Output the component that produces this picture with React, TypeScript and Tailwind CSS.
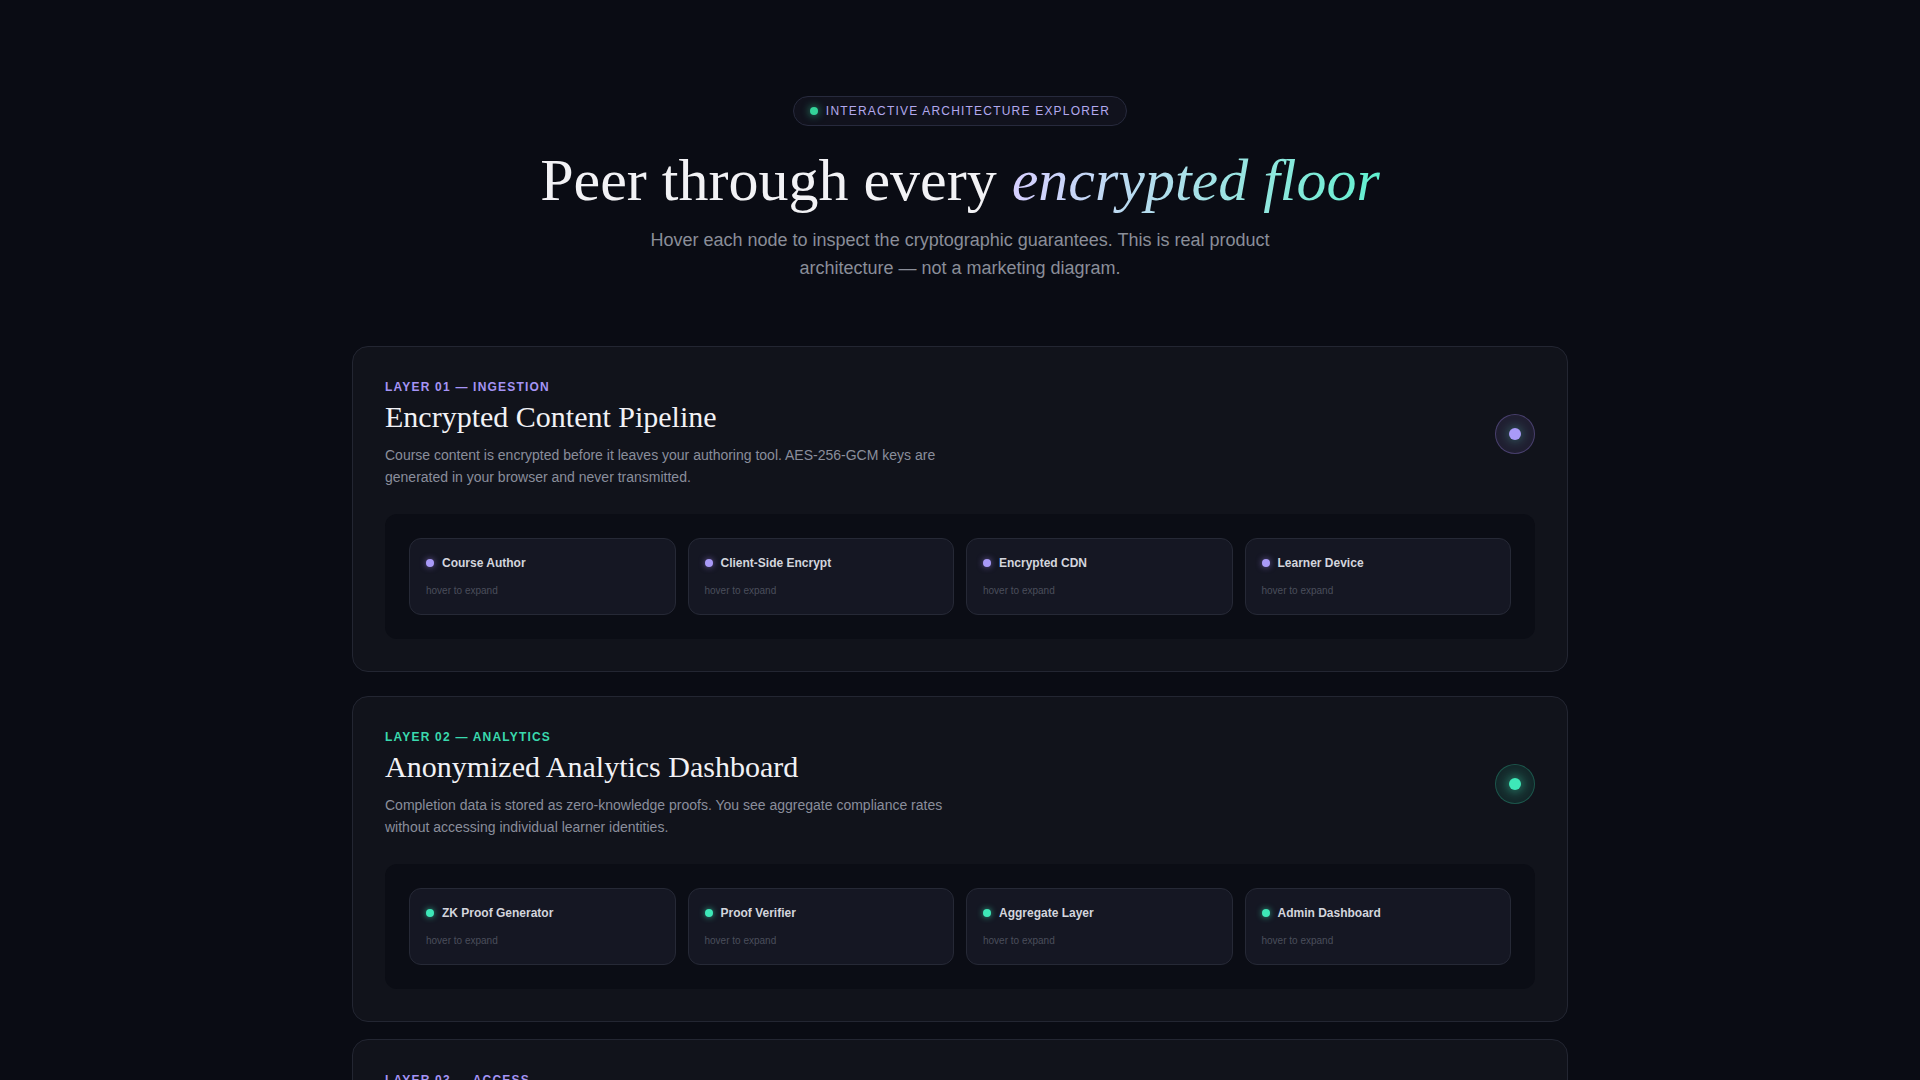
import React from "react";

type Node = { name: string };
type Layer = {
  label: string;
  title: string;
  desc: string;
  accent: "violet" | "teal";
  nodes: Node[];
  spacing: string;
};

const layers: Layer[] = [
  {
    label: "LAYER 01 — INGESTION",
    title: "Encrypted Content Pipeline",
    desc: "Course content is encrypted before it leaves your authoring tool. AES-256-GCM keys are generated in your browser and never transmitted.",
    accent: "violet",
    nodes: [
      { name: "Course Author" },
      { name: "Client-Side Encrypt" },
      { name: "Encrypted CDN" },
      { name: "Learner Device" },
    ],
    spacing: "",
  },
  {
    label: "LAYER 02 — ANALYTICS",
    title: "Anonymized Analytics Dashboard",
    desc: "Completion data is stored as zero-knowledge proofs. You see aggregate compliance rates without accessing individual learner identities.",
    accent: "teal",
    nodes: [
      { name: "ZK Proof Generator" },
      { name: "Proof Verifier" },
      { name: "Aggregate Layer" },
      { name: "Admin Dashboard" },
    ],
    spacing: "mt-6",
  },
  {
    label: "LAYER 03 — ACCESS",
    title: "Zero-Knowledge Access Control",
    desc: "Learners authenticate with credentials that prove eligibility without revealing who they are. Access keys rotate per session.",
    accent: "violet",
    nodes: [
      { name: "Credential Issuer" },
      { name: "Proof Request" },
      { name: "Access Gate" },
      { name: "Session Keys" },
    ],
    spacing: "mt-[17px]",
  },
];

function LayerCard({ layer }: { layer: Layer }) {
  const violet = layer.accent === "violet";
  return (
    <section
      className={`${layer.spacing} rounded-2xl border border-[#232632] bg-[#11131b] p-8`}
    >
      <div className="flex items-center justify-between">
        <div>
          <div
            className={`text-xs font-bold leading-4 tracking-[0.1em] ${
              violet ? "text-[#a594f5]" : "text-[#3ad9ae]"
            }`}
          >
            {layer.label}
          </div>
          <h2
            className="mt-1 text-[30px] leading-9 text-[#f1f1f5]"
            style={{ fontFamily: '"Liberation Serif", "Times New Roman", serif' }}
          >
            {layer.title}
          </h2>
          <p className="mt-[9px] max-w-xl text-sm leading-[22px] text-[#8a8e9b]">
            {layer.desc}
          </p>
        </div>
        <div
          className={`flex h-10 w-10 items-center justify-center rounded-full border ${
            violet
              ? "border-[#a78bfa]/30 bg-[#a78bfa]/10"
              : "border-[#34e0b0]/25 bg-[#34e0b0]/10"
          }`}
        >
          <div
            className={`h-3 w-3 rounded-full ${
              violet
                ? "bg-[#a99af8] shadow-[0_0_10px_2px_rgba(94,234,212,0.25)]"
                : "bg-[#3ee8b8] shadow-[0_0_10px_3px_rgba(62,232,184,0.35)]"
            }`}
          />
        </div>
      </div>
      <div className="mt-[26px] rounded-xl bg-[#0b0d15] p-6">
        <div className="grid grid-cols-4 gap-3">
          {layer.nodes.map((n) => (
            <div
              key={n.name}
              className="rounded-xl border border-[#262936] bg-[#151723] p-4"
            >
              <div className="flex items-center gap-2">
                <span
                  className={`h-2 w-2 rounded-full ${
                    violet
                      ? "bg-[#a99af8] shadow-[0_0_6px_rgba(167,139,250,0.6)]"
                      : "bg-[#3ee8b8] shadow-[0_0_6px_rgba(62,232,184,0.7)]"
                  }`}
                />
                <span className="text-xs font-bold leading-4 text-[#d3d5dd]">
                  {n.name}
                </span>
              </div>
              <div className="mt-[13px] text-[10px] leading-[14px] text-[#4a4e5b]">
                hover to expand
              </div>
            </div>
          ))}
        </div>
      </div>
    </section>
  );
}

export default function App() {
  return (
    <div
      className="h-[1080px] overflow-hidden bg-[#0a0c14] pt-24"
      style={{ fontFamily: '"Liberation Sans", Arial, sans-serif' }}
    >
      <div className="flex flex-col items-center text-center">
        <div className="flex items-center gap-2 rounded-full border border-[#272a3d] bg-[#11121d] px-4 py-[6px]">
          <span className="h-2 w-2 rounded-full bg-[#34d399] shadow-[0_0_8px_rgba(52,211,153,0.8)]" />
          <span className="text-xs leading-4 tracking-[0.1em] text-[#b3a9ee]">
            INTERACTIVE ARCHITECTURE EXPLORER
          </span>
        </div>
        <h1
          className="mt-6 text-6xl leading-none text-[#f2f2f5]"
          style={{ fontFamily: '"Liberation Serif", "Times New Roman", serif' }}
        >
          Peer through every{" "}
          <em className="bg-gradient-to-r from-[#d6cfff] to-[#5ef0cf] bg-clip-text text-transparent">
            encrypted floor
          </em>
        </h1>
        <p className="mt-4 max-w-2xl text-lg leading-7 text-[#8a8e99]">
          Hover each node to inspect the cryptographic guarantees. This is real
          product architecture — not a marketing diagram.
        </p>
      </div>
      <div className="mx-auto mt-16 flex max-w-7xl flex-col px-8">
        {layers.map((l) => (
          <LayerCard key={l.label} layer={l} />
        ))}
      </div>
    </div>
  );
}
